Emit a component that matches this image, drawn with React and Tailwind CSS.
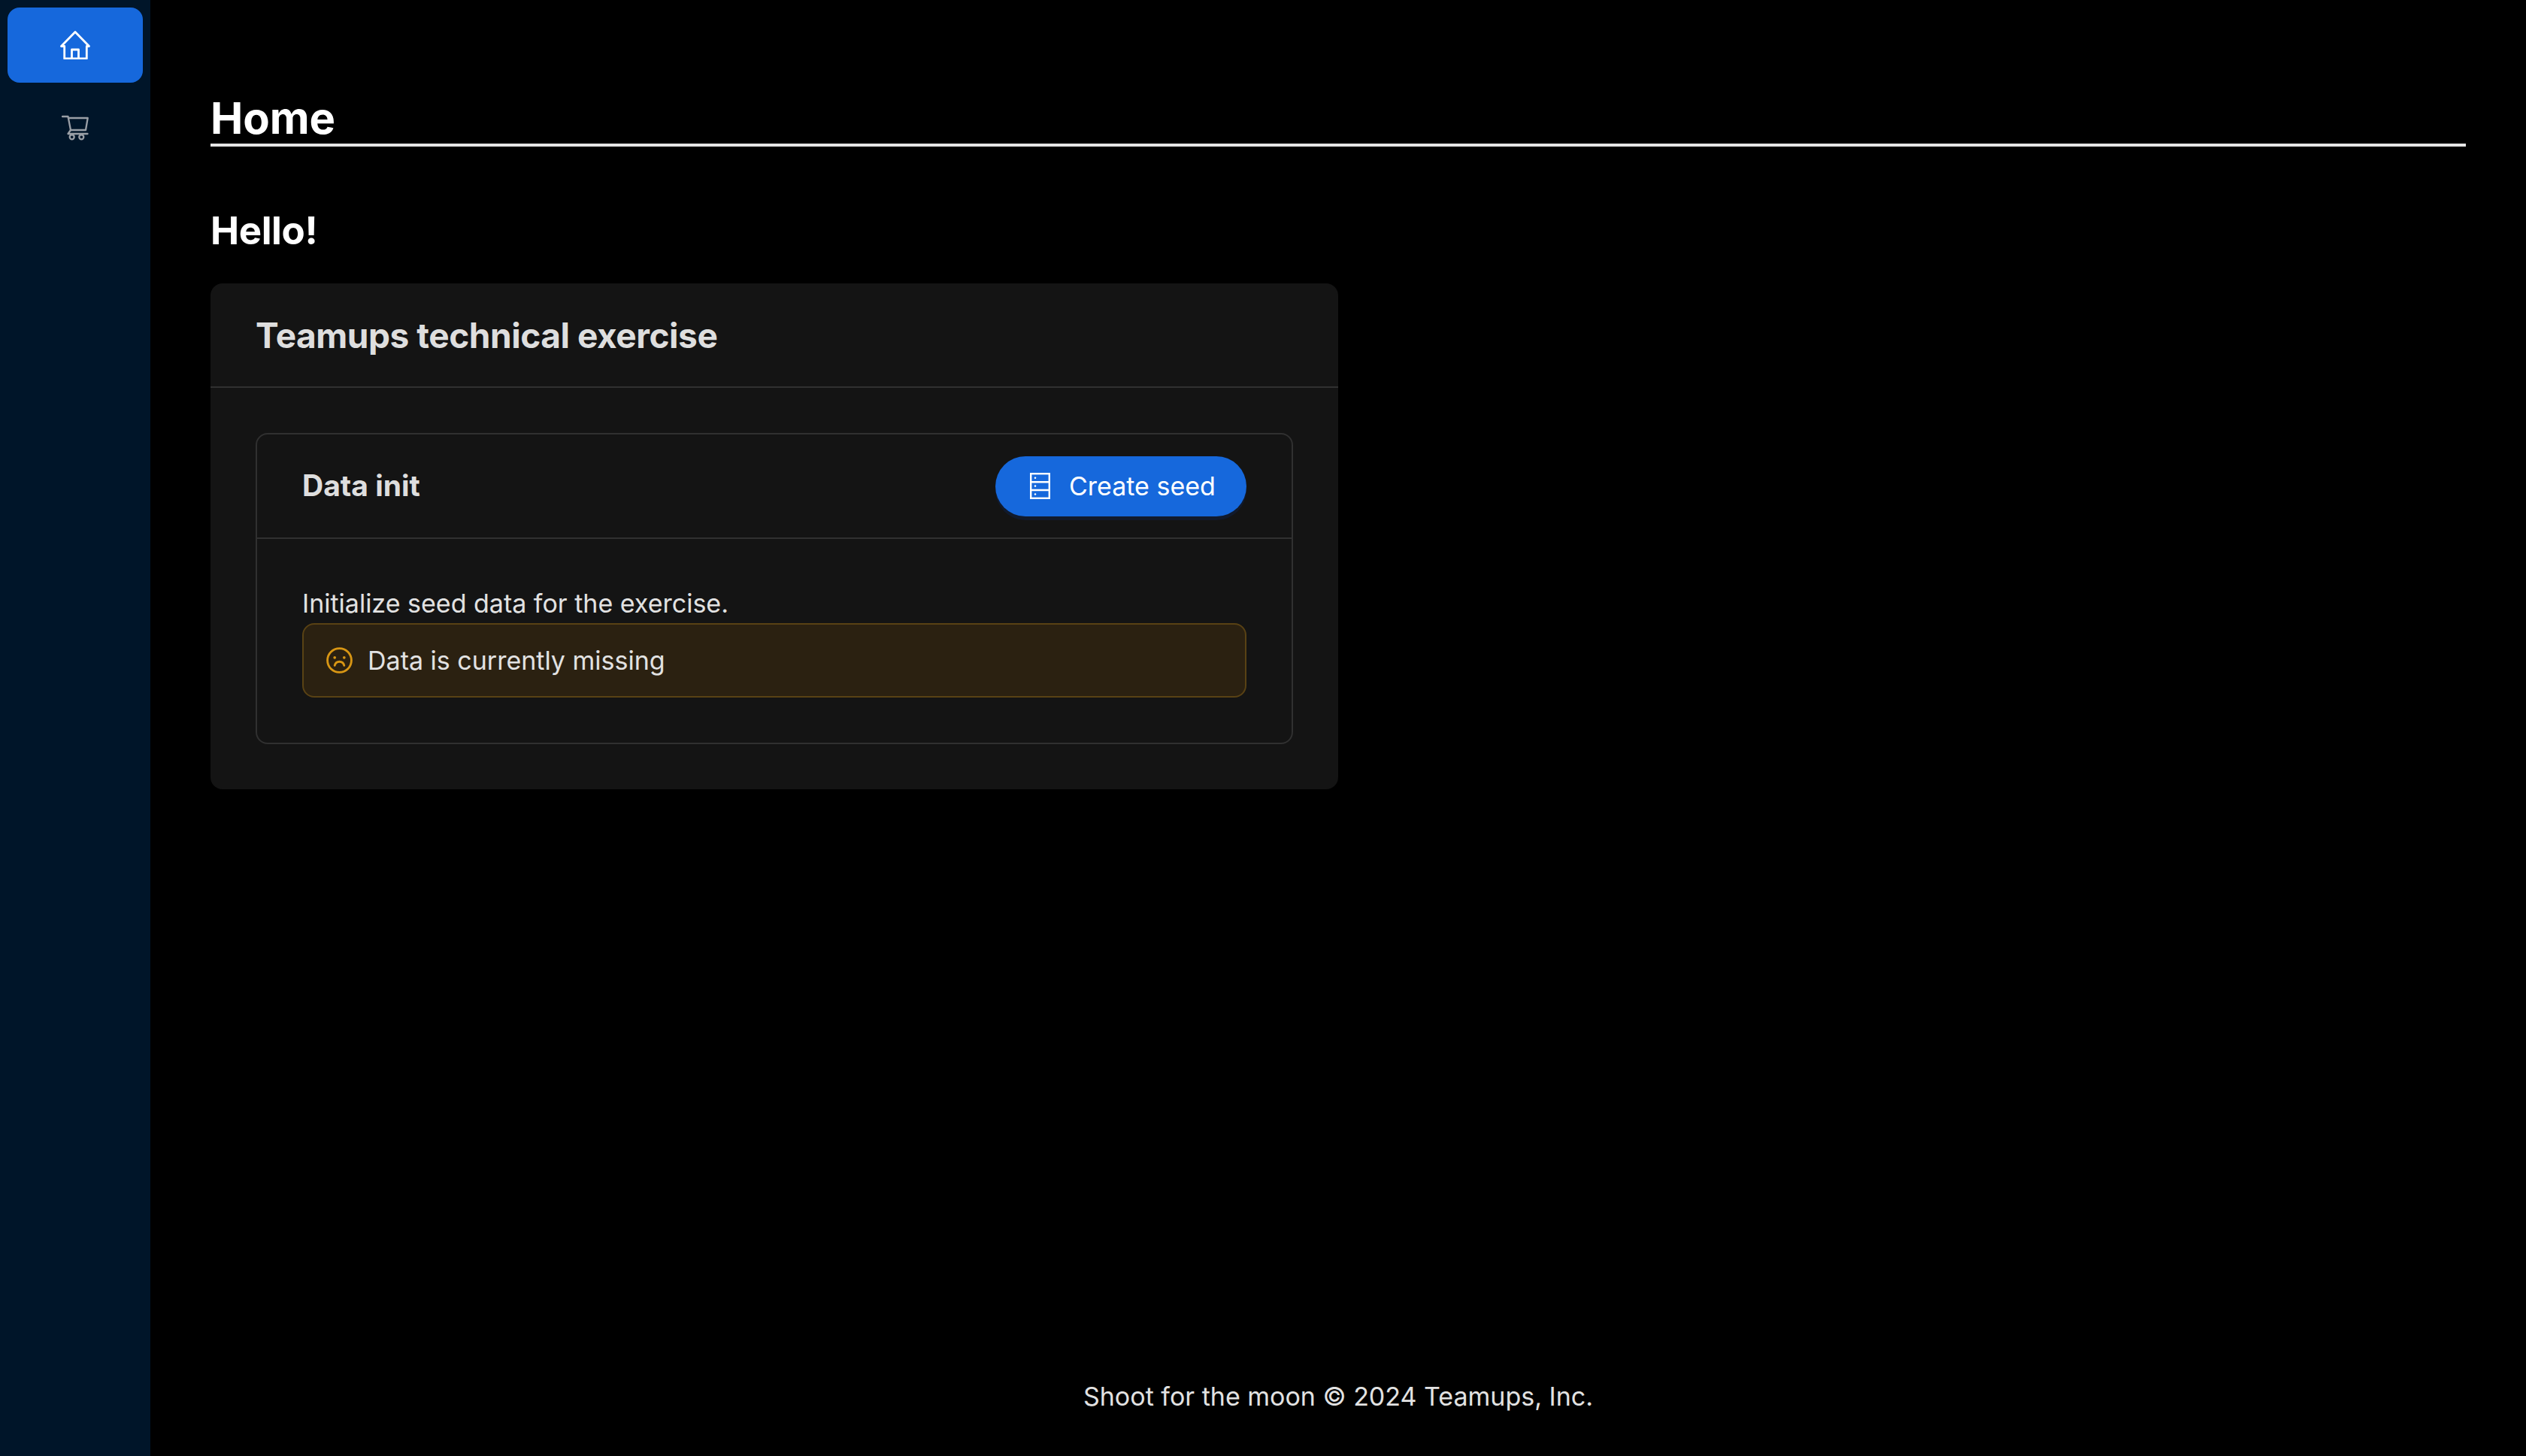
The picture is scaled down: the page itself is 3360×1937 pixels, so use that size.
import React from "react";

function HomeIcon() {
  return (
    <svg width="40" height="38" viewBox="0 0 40 38" fill="none" stroke="#fff" strokeWidth="2.8" strokeLinejoin="round">
      <path d="M20 1.5 L1.5 20.5 H5.7 V37 H35.3 V20.5 H38.5 Z" />
      <path d="M15.5 37 V25 H24.5 V37" />
    </svg>
  );
}

function CartIcon() {
  return (
    <svg width="36" height="34" viewBox="0 0 36 34" fill="none" stroke="#9a9fa6" strokeWidth="2.3" strokeLinecap="round" strokeLinejoin="round">
      <path d="M1 2 H8.5 L12 20" />
      <path d="M9 4 H34.7 L32 20 H12" />
      <path d="M12 20 L8.5 25 H34.5" />
      <circle cx="13.7" cy="29.3" r="3" />
      <circle cx="26.3" cy="29.3" r="3" />
    </svg>
  );
}

function SeedIcon() {
  return (
    <svg width="27" height="35" viewBox="0 0 27 35" fill="none" stroke="#fff" strokeWidth="2.4" className="shrink-0">
      <rect x="1.2" y="1.2" width="24.6" height="32.6" />
      <path d="M1 12.2 H26 M1 23 H26" />
      <circle cx="7" cy="6.7" r="1.3" fill="#fff" stroke="none" />
      <circle cx="7" cy="17.6" r="1.3" fill="#fff" stroke="none" />
      <circle cx="7" cy="28.5" r="1.3" fill="#fff" stroke="none" />
    </svg>
  );
}

function FrownIcon() {
  return (
    <svg width="35" height="35" viewBox="0 0 36 36" fill="none" stroke="#d89614" strokeWidth="2.9" className="shrink-0">
      <circle cx="18" cy="18" r="16.4" />
      <circle cx="11.5" cy="14.2" r="1.9" fill="#d89614" stroke="none" />
      <circle cx="24.5" cy="14.2" r="1.9" fill="#d89614" stroke="none" />
      <path d="M11.5 25 C12.5 21 15.5 19.8 18 19.8 C20.5 19.8 23.5 21 24.5 25" strokeLinecap="round" />
    </svg>
  );
}

export default function App() {
  return (
    <div className="flex h-[1937px] bg-black text-white font-['Inter',sans-serif]">
      <aside className="w-[200px] shrink-0 bg-[#001529] px-[10px] pt-[10px] flex flex-col gap-[10px]">
        <div className="h-[100px] rounded-[16px] bg-[#1668dc] flex items-center justify-center">
          <HomeIcon />
        </div>
        <div className="h-[100px] flex items-center justify-center">
          <CartIcon />
        </div>
      </aside>
      <main className="flex-1 flex flex-col px-[80px]">
        <h1 className="mt-[121px] h-[74px] text-[58px] leading-[72px] font-bold tracking-[-0.1px] border-b-[4px] border-[#e5e5e5]">Home</h1>
        <h2 className="mt-[80px] text-[51px] leading-[64px] font-bold tracking-[-0.4px]">Hello!</h2>
        <section className="mt-[38px] w-[1500px] rounded-[16px] bg-[#141414]">
          <div className="h-[139px] px-[60px] pt-[1px] flex items-center text-[46px] font-bold tracking-[-0.45px] text-[#dedede] border-b-2 border-[#303030]">Teamups technical exercise</div>
          <div className="p-[60px]">
            <div className="rounded-[16px] border-2 border-[#303030]">
              <div className="h-[139px] px-[60px] flex items-center justify-between border-b-2 border-[#303030]">
                <span className="text-[39px] font-bold text-[#dedede]">Data init</span>
                <button className="h-[80px] w-[334px] rounded-full bg-[#1668dc] shadow-[0_5px_0_#111a2c] flex items-center pl-[46px] gap-[25px] text-[34px] text-white">
                  <SeedIcon />
                  Create seed
                </button>
              </div>
              <div className="p-[60px] text-[34px] text-[#e2e2e2]">
                <p className="leading-[52px]">Initialize seed data for the exercise.</p>
                <div className="h-[99px] rounded-[16px] border-2 border-[#594214] bg-[#2b2111] flex items-center gap-[20px] px-[30px]">
                  <FrownIcon />
                  Data is currently missing
                </div>
              </div>
            </div>
          </div>
        </section>
        <footer className="mt-auto pb-[53px] text-center text-[34px] leading-[52px] text-[#e2e2e2]">Shoot for the moon © 2024 Teamups, Inc.</footer>
      </main>
    </div>
  );
}
